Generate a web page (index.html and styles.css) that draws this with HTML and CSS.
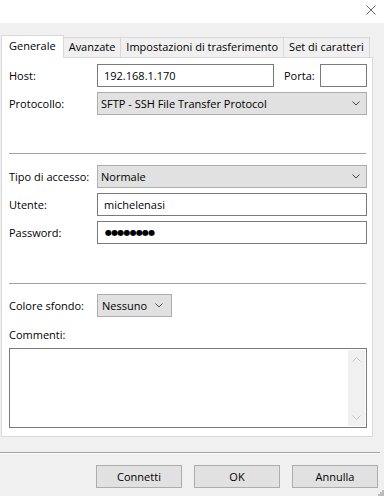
FILE: index.html
```html
<!DOCTYPE html>
<html lang="it">
<head>
  <meta charset="UTF-8">
  <meta name="viewport" content="width=device-width, initial-scale=1">
  <title>Gestore siti</title>
  <link rel="stylesheet" href="styles.css">
</head>
<body>
  <div class="dialog">
    <!-- Title bar -->
    <div class="titlebar">
      <button class="close" aria-label="Chiudi">
        <svg width="10" height="10" viewBox="0 0 10 10">
          <path d="M0.5 0.5 L9.5 9.5 M9.5 0.5 L0.5 9.5" stroke="#6b6b6b" stroke-width="1" fill="none"/>
        </svg>
      </button>
    </div>

    <!-- Tabs -->
    <div class="tabs">
      <div class="tab active">Generale</div>
      <div class="tab">Avanzate</div>
      <div class="tab">Impostazioni di trasferimento</div>
      <div class="tab">Set di caratteri</div>
    </div>

    <!-- General panel -->
    <div class="panel">
      <div class="row">
        <label class="lbl" for="host">Host:</label>
        <input class="field host" id="host" type="text" value="192.168.1.170">
        <label class="porta-lbl" for="porta">Porta:</label>
        <input class="field porta" id="porta" type="text">
      </div>
      <div class="row gap">
        <label class="lbl">Protocollo:</label>
        <div class="combo wide">
          <span>SFTP - SSH File Transfer Protocol</span>
          <svg class="chevron" width="8" height="5" viewBox="0 0 8 5"><path d="M0.5 0.5 L4 4 L7.5 0.5" stroke="#444" fill="none"/></svg>
        </div>
      </div>

      <hr class="sep first">

      <div class="row after-first">
        <label class="lbl">Tipo di accesso:</label>
        <div class="combo wide">
          <span>Normale</span>
          <svg class="chevron" width="8" height="5" viewBox="0 0 8 5"><path d="M0.5 0.5 L4 4 L7.5 0.5" stroke="#444" fill="none"/></svg>
        </div>
      </div>
      <div class="row gap">
        <label class="lbl" for="utente">Utente:</label>
        <input class="field wide" id="utente" type="text" value="michelenasi">
      </div>
      <div class="row gap">
        <label class="lbl" for="password">Password:</label>
        <div class="field wide dots" id="password">●●●●●●●●</div>
      </div>

      <hr class="sep second">

      <div class="row after-second">
        <label class="lbl">Colore sfondo:</label>
        <div class="combo small">
          <span>Nessuno</span>
          <svg class="chevron" width="8" height="5" viewBox="0 0 8 5"><path d="M0.5 0.5 L4 4 L7.5 0.5" stroke="#555" fill="none"/></svg>
        </div>
      </div>

      <div class="comment-lbl">Commenti:</div>
      <div class="comments">
        <div class="scrollbar">
          <svg width="9" height="5" viewBox="0 0 9 5"><path d="M0.5 4.5 L4.5 0.5 L8.5 4.5" stroke="#c8c8c8" fill="none"/></svg>
          <svg width="9" height="5" viewBox="0 0 9 5"><path d="M0.5 0.5 L4.5 4.5 L8.5 0.5" stroke="#c8c8c8" fill="none"/></svg>
        </div>
      </div>
    </div>

    <hr class="footer-sep">

    <!-- Buttons -->
    <div class="buttons">
      <button class="btn">Connetti</button>
      <button class="btn">OK</button>
      <button class="btn">Annulla</button>
    </div>

    <svg class="grip" width="6" height="6" viewBox="0 0 6 6">
      <rect x="4" y="0" width="2" height="2" fill="#bcbcbc"/>
      <rect x="2" y="2" width="2" height="2" fill="#bcbcbc"/>
      <rect x="4" y="2" width="2" height="2" fill="#bcbcbc"/>
      <rect x="0" y="4" width="2" height="2" fill="#bcbcbc"/>
      <rect x="2" y="4" width="2" height="2" fill="#bcbcbc"/>
      <rect x="4" y="4" width="2" height="2" fill="#bcbcbc"/>
    </svg>
  </div>
</body>
</html>
```

FILE: styles.css
```css
/* Reset */
* {
  margin: 0;
  padding: 0;
  box-sizing: border-box;
}

body {
  font-family: "Open Sans", "Noto Sans", sans-serif;
  font-size: 11px;
  color: #000;
  background: #f0f0f0;
}

.dialog {
  position: relative;
  width: 384px;
  height: 496px;
  overflow: hidden;
}

/* Title bar */
.titlebar {
  height: 23px;
  background: #fff;
  display: flex;
  justify-content: flex-end;
  padding: 5px 8px 0 0;
}

.close {
  width: 10px;
  height: 10px;
  border: none;
  background: none;
  display: block;
}

.close svg {
  display: block;
}

/* Tabs */
.tabs {
  display: flex;
  align-items: flex-end;
  height: 22px;
  margin-top: 12px;
  padding-left: 1px;
}

.tab {
  height: 20px;
  line-height: 18px;
  padding: 0 5px;
  background: #f0f0f0;
  border: 1px solid #d9d9d9;
  border-bottom: none;
  margin-left: -1px;
  white-space: nowrap;
}

.tab:first-child {
  margin-left: 0;
}

.tab.active {
  position: relative;
  z-index: 1;
  height: 23px;
  margin-bottom: -1px;
  line-height: 19px;
  padding: 0 7px;
  background: #fff;
}

/* Panel */
.panel {
  width: 372px;
  height: 380px;
  margin-left: 1px;
  background: #fff;
  border: 1px solid #d9d9d9;
  padding: 6px 5px 0 7px;
}

.row {
  display: flex;
  align-items: center;
  height: 23px;
}

.row.gap {
  margin-top: 5px;
}

.row.after-first {
  margin-top: 11px;
}

.row.after-second {
  margin-top: 10px;
}

.lbl {
  width: 88px;
  flex-shrink: 0;
}

.porta-lbl {
  width: 36px;
  margin-left: 10px;
}

.field {
  height: 23px;
  border: 1px solid #7a7a7a;
  background: #fff;
  font: inherit;
  color: #000;
  padding: 0 6px;
  outline: none;
}

.field.host {
  width: 177px;
}

.field.porta {
  width: 47px;
}

.wide {
  width: 270px;
}

.dots {
  display: flex;
  align-items: center;
  font-family: "DejaVu Sans", sans-serif;
  font-size: 8px;
  letter-spacing: -0.8px;
  padding-left: 7px;
}

/* Combo boxes */
.combo {
  height: 23px;
  display: flex;
  align-items: center;
  justify-content: space-between;
  background: #e1e1e1;
  border: 1px solid #adadad;
  padding: 0 6px 0 3px;
}

.combo.small {
  width: 75px;
  padding-left: 4px;
  padding-right: 8px;
}

.chevron {
  display: block;
}

/* Separators */
.sep {
  border: none;
  border-top: 1px solid #a0a0a0;
  width: 357px;
}

.sep.first {
  margin-top: 38px;
}

.sep.second {
  margin-top: 39px;
}

/* Comments */
.comment-lbl {
  margin-top: 10px;
  line-height: 16px;
}

.comments {
  margin-top: 5px;
  width: 358px;
  height: 80px;
  border: 1px solid #7a7a7a;
  display: flex;
  justify-content: flex-end;
  padding: 1px;
}

.scrollbar {
  width: 17px;
  background: #f0f0f0;
  display: flex;
  flex-direction: column;
  justify-content: space-between;
  align-items: center;
  padding: 7px 0 6px;
}

.scrollbar svg {
  display: block;
}

/* Footer */
.footer-sep {
  border: none;
  border-top: 1px solid #a0a0a0;
  border-bottom: 1px solid #fff;
  width: 380px;
  margin-top: 15px;
}

.buttons {
  display: flex;
  gap: 12px;
  padding-left: 96px;
  margin-top: 11px;
}

.btn {
  width: 86px;
  height: 23px;
  background: #e1e1e1;
  border: 1px solid #adadad;
  font: inherit;
  color: #000;
}

.grip {
  position: absolute;
  right: 0;
  bottom: 0;
}
```
